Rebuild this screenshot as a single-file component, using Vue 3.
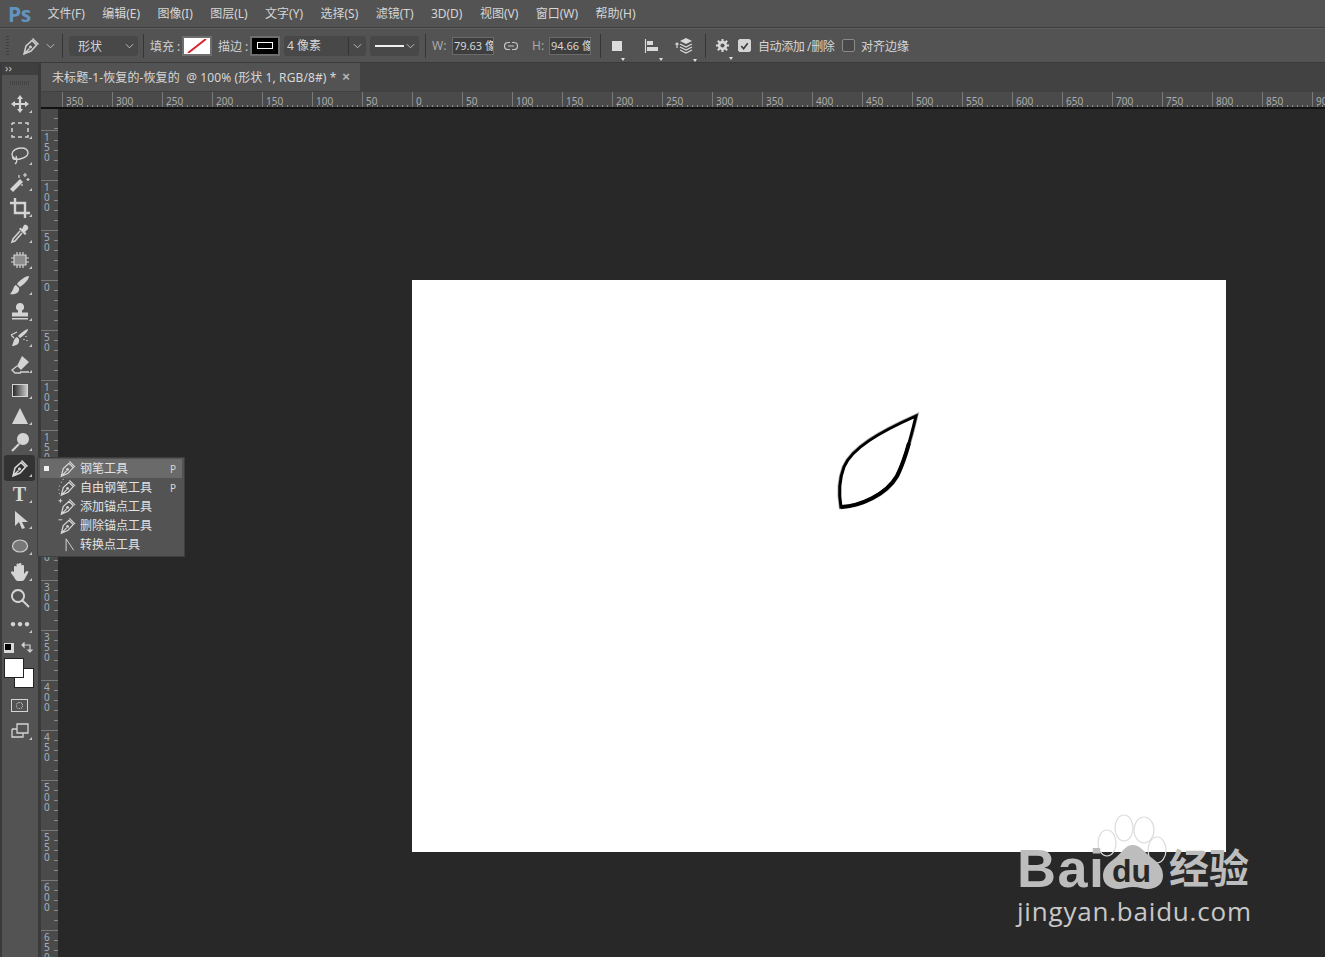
<script setup>
const menus = ['文件(F)', '编辑(E)', '图像(I)', '图层(L)', '文字(Y)', '选择(S)', '滤镜(T)', '3D(D)', '视图(V)', '窗口(W)', '帮助(H)']

const penStroke = 'M3 18l2-8 6-5.500 4.500 4.500-5.500 6zM3 18l5.500-5.500M11.500 2.500l6 6'
const penDot = 'M9.500 9.500a1.500 1.500 0 1 0 .01 0z'

const tools = [
  { fill: 'M10 1l3 4H7zM10 19l-3-4h6zM1 10l4-3v6zM19 10l-4 3V7z', stroke: 'M10 3v14M3 10h14', width: 2.2, corner: true },
  { stroke: 'M2 3h3M8 3h4M15 3h3v2M18 8v4M18 15v2h-3M12 17H8M5 17H2v-2M2 12V8M2 5V3', width: 1.5, corner: true },
  { stroke: 'M2 8c0-3 4-6 9-6s7 2 7 5-4 5-8 6-8-1-8-5zM3 10c-1 2 0 4 3 3M6 10c1 3 2 6-1 8', width: 1.4, corner: true },
  { fill: 'M3 20l-3-3 10-10 3 3z', stroke: 'M15 1v4M13 3h4M18 6v3M16.500 7.500h3M9 3v3M12 12v2', width: 1.2, corner: true },
  { stroke: 'M5 0v15h15M0 5h15v15', width: 2.4, corner: true },
  { fill: 'M14 1c3-1 5 2 4 4l-3 3 1.500 1.500-1.500 1.500-6-6 1.500-1.500L12 5z', stroke: 'M10 7l-7 8-1 3 3-1 7-8', width: 1.500, corner: true },
  { fill: 'M4 5h12v10H4z', fc: '#8c8c8c', stroke: 'M4 5h12v10H4zM7 2v3M10 2v3M13 2v3M7 15v3M10 15v3M13 15v3M1 8h3M1 12h3M16 8h3M16 12h3', width: 1.2, corner: true },
  { fill: 'M19 0c0 4-6 9-9 11l-3-3c2-3 8-8 12-8zM6 9c-3 1-2 5-6 9 5 1 10-1 9-6z', corner: true },
  { fill: 'M10 1a4 4 0 0 1 2 7.500v2h6v4H2v-4h6v-2A4 4 0 0 1 10 1zM2 16h16v1.500H2z', corner: true },
  { fill: 'M18 1c0 3-5 7-8 9l-2-2c2-2 6-6 10-7zM7 9c-3 1-3 4-5 9 4 0 8-2 7-7z', stroke: 'M1 7l6-3M1 7l3 3M14 11v1M16 8v1M17 12v1', width: 1.3, corner: true },
  { fill: 'M12 2l7 6-8 8-4-4z', stroke: 'M7 12l-5 4 3 3h6M10 18h9', width: 1.3, corner: true },
  { gradient: true, corner: true },
  { fill: 'M10 2l8 16H2z', corner: true },
  { fill: 'M13 1a6 6 0 1 1-.01 0z', stroke: 'M9 12l-7 7', width: 2.2, corner: true },
  { pen: true, corner: true },
  { letter: 'T', corner: true },
  { fill: 'M5 1v15l4-4 3 7 3-1-3-6h6z', corner: true },
  { ellipse: true, corner: true },
  { fill: 'M4 11V5c0-1.500 2.500-1.500 2.500 0v4V2.500c0-1.500 2.500-1.500 2.500 0V9V2c0-1.500 2.500-1.500 2.500 0v7V4c0-1.500 2.500-1.500 2.500 0v8l2-2.500c1.500-1.500 3 0 2 1.500l-3 5.500c-1 2-2 2.500-4 2.500H8c-2 0-3-2-4-4l-3-4c-.5-1.500 1.500-2.500 3-1z', corner: true },
  { stroke: 'M8 2a6 6 0 1 0 .01 0zM12 12l7 7', width: 1.9 },
  { fill: 'M3 8a2.200 2.200 0 1 0 .01 0zM10 8a2.200 2.200 0 1 0 .01 0zM17 8a2.200 2.200 0 1 0 .01 0z', corner: true },
]

const flyout = [
  { label: '钢笔工具', key: 'P', active: true },
  { label: '自由钢笔工具', key: 'P', extra: 'M1 17v-1M0.500 13v-1M1 9V8M3 5V4M5 2V1' },
  { label: '添加锚点工具', extra: 'M0 4h4M2 2v4' },
  { label: '删除锚点工具', extra: 'M0 4h4' },
  { label: '转换点工具', convert: true },
]

const hLabels = [350, 300, 250, 200, 150, 100, 50, 0]
for (let v = 50; v <= 900; v += 50) hLabels.push(v)

const vLabels = []
for (const v of [150, 100, 50, 0, 50, 100, 150, 200, 250, 300, 350, 400, 450, 500, 550, 600, 650]) {
  vLabels.push(String(v).split(''))
}
</script>

<template>
  <div class="app">
    <header class="menubar">
      <span class="logo">Ps</span>
      <span v-for="m in menus" :key="m" class="menu">{{ m }}</span>
    </header>

    <div class="options">
      <span class="grip"></span>
      <svg class="opt-pen" viewBox="0 0 20 20" width="20" height="20">
        <path :d="penStroke" fill="none" stroke="#d0d0d0" stroke-width="1.500" />
        <path :d="penDot" fill="#d0d0d0" />
      </svg>
      <svg class="chev opt-chev" viewBox="0 0 10 6" width="9" height="6"><path d="M1 1l4 4 4-4" /></svg>
      <span class="sep sep-a"></span>
      <div class="select shape-select">
        <span>形状</span>
        <svg class="chev" viewBox="0 0 10 6" width="9" height="6"><path d="M1 1l4 4 4-4" /></svg>
      </div>
      <span class="sep sep-b"></span>
      <span class="lbl fill-lbl">填充 :</span>
      <span class="swatch fill-swatch">
        <svg viewBox="0 0 24 14" width="24" height="14"><path d="M3 14L21 0" stroke="#d8262c" stroke-width="2" /></svg>
      </span>
      <span class="lbl stroke-lbl">描边 :</span>
      <span class="swatch stroke-swatch"><i></i></span>
      <div class="select width-select">
        <span class="w-val">4 像素</span>
        <span class="w-btn"><svg class="chev" viewBox="0 0 10 6" width="9" height="6"><path d="M1 1l4 4 4-4" /></svg></span>
      </div>
      <div class="select line-select">
        <i class="line"></i>
        <svg class="chev" viewBox="0 0 10 6" width="9" height="6"><path d="M1 1l4 4 4-4" /></svg>
      </div>
      <span class="sep sep-c"></span>
      <span class="lbl dim w-lbl">W:</span>
      <span class="input">79.63 像</span>
      <svg class="link" viewBox="0 0 14 10" width="14" height="10">
        <path d="M6 1.500H4a3.500 3.500 0 0 0 0 7h2M8 1.500h2a3.500 3.500 0 0 1 0 7H8M4 5h6" fill="none" stroke="#c4c4c4" stroke-width="1.200" />
      </svg>
      <span class="lbl dim h-lbl">H:</span>
      <span class="input">94.66 像</span>
      <span class="sep sep-d"></span>
      <span class="op-icon path-op"><i class="square"></i></span>
      <span class="op-icon align-op">
        <svg viewBox="0 0 16 16" width="16" height="16"><path d="M1.500 1v14" stroke="#d8d8d8" stroke-width="1.200" /><path d="M3 3h6v4H3zM3 9h11v4H3z" fill="#d8d8d8" /></svg>
      </span>
      <span class="op-icon stack-op">
        <svg viewBox="0 0 20 18" width="20" height="18"><path d="M12 1l6 3-6 3-6-3z" fill="#d8d8d8" /><path d="M6 7l6 3 6-3M6 10l6 3 6-3M6 13l6 3 6-3M3 11V6M1.500 7.500L3 6l1.500 1.500" fill="none" stroke="#d8d8d8" stroke-width="1.200" /></svg>
      </span>
      <span class="sep sep-e"></span>
      <span class="op-icon gear-op">
        <svg viewBox="0 0 16 16" width="15" height="15"><circle cx="8" cy="8" r="3.500" fill="none" stroke="#d8d8d8" stroke-width="3" /><path d="M8 1v14M1 8h14M3 3l10 10M13 3L3 13" stroke="#d8d8d8" stroke-width="2.200" /><circle cx="8" cy="8" r="2.200" fill="#535353" /></svg>
      </span>
      <span class="check checked">
        <svg viewBox="0 0 12 12" width="12" height="12"><path d="M2.500 6l2.500 3 4.500-6" fill="none" stroke="#3c3c3c" stroke-width="1.800" /></svg>
      </span>
      <span class="opt-text auto-text">自动添加 /删除</span>
      <span class="check"></span>
      <span class="opt-text">对齐边缘</span>
    </div>

    <div class="workspace">
      <aside class="toolbar">
        <div class="tool-strip">››</div>
        <div class="tool-grip"></div>
        <div v-for="(t, i) in tools" :key="i" class="tool" :class="{ active: t.pen, corner: t.corner }">
          <svg v-if="t.pen" viewBox="0 0 20 20" width="20" height="20">
            <path :d="penStroke" fill="none" stroke="#dcdcdc" stroke-width="1.500" />
            <path :d="penDot" fill="#dcdcdc" />
          </svg>
          <span v-else-if="t.gradient" class="grad"></span>
          <span v-else-if="t.letter" class="letter">{{ t.letter }}</span>
          <svg v-else-if="t.ellipse" viewBox="0 0 20 20" width="20" height="20">
            <ellipse cx="10" cy="10" rx="7.500" ry="6" fill="#787878" stroke="#cfcfcf" stroke-width="1.200" />
          </svg>
          <svg v-else viewBox="0 0 20 20" width="20" height="20">
            <path v-if="t.fill" :d="t.fill" :fill="t.fc || '#d4d4d4'" />
            <path v-if="t.stroke" :d="t.stroke" fill="none" stroke="#d4d4d4" :stroke-width="t.width" />
          </svg>

          <div v-if="t.pen" class="flyout">
            <div v-for="f in flyout" :key="f.label" class="fly-row" :class="{ on: f.active }">
              <i class="bullet"></i>
              <svg class="fly-icon" viewBox="0 0 20 20" width="20" height="19">
                <template v-if="f.convert">
                  <path d="M8 17V4l8 12" fill="none" stroke="#d8d8d8" stroke-width="1" />
                </template>
                <template v-else>
                  <path :d="penStroke" fill="none" stroke="#d8d8d8" stroke-width="1.300" />
                  <path :d="penDot" fill="#d8d8d8" />
                  <path v-if="f.extra" :d="f.extra" fill="none" stroke="#d8d8d8" stroke-width="1" />
                </template>
              </svg>
              <span class="fly-label">{{ f.label }}</span>
              <span class="fly-key">{{ f.key }}</span>
            </div>
          </div>
        </div>

        <div class="colors">
          <span class="mini-swatch"><i></i></span>
          <svg class="swap" viewBox="0 0 12 12" width="12" height="12"><path d="M2 3h7v5M1 3l2-2v4zM9 10l-2-2h4z" fill="none" stroke="#d4d4d4" stroke-width="1.200" /></svg>
          <span class="bg-color"></span>
          <span class="fg-color"></span>
        </div>
        <div class="tool">
          <span class="mask"><i></i></span>
        </div>
        <div class="tool corner">
          <svg viewBox="0 0 20 20" width="20" height="20">
            <path d="M7 3h11v9H7z M2 8h5M2 8v8h11v-4" fill="none" stroke="#d4d4d4" stroke-width="1.300" />
          </svg>
        </div>
      </aside>

      <main class="main">
        <div class="tabs">
          <div class="tab">
            <span>未标题-1-恢复的-恢复的&nbsp; @ 100% (形状 1, RGB/8#) *</span>
            <b class="close">×</b>
          </div>
        </div>
        <div class="h-ruler">
          <div class="corner-box"></div>
          <div v-for="(l, i) in hLabels" :key="i" class="h-cell"><span>{{ l }}</span></div>
        </div>
        <div class="stage">
          <div class="v-ruler">
            <div class="v-spacer"></div>
            <div v-for="(l, i) in vLabels" :key="i" class="v-cell">
              <span v-for="(d, j) in l" :key="j">{{ d }}</span>
            </div>
          </div>
          <div class="canvas">
            <div class="doc">
              <svg class="doc-art" viewBox="412 280 814 572" width="814" height="572">
                <path d="M916 416C880 432 852 448 844 467C839 480 839 495 841 507C860 506 886 495 897 476C905 460 911 437 916 416Z" fill="none" stroke="#a0a0a0" stroke-width="4.500" />
                <path d="M916 416C880 432 852 448 844 467C839 480 839 495 841 507C860 506 886 495 897 476C905 460 911 437 916 416Z" fill="#fff" stroke="#000" stroke-width="3" />
                <path d="M841 507C860 506 886 495 897 476C902 466 906 454 909 443" fill="none" stroke="#000" stroke-width="4" />
              </svg>
            </div>
          </div>
        </div>
      </main>
    </div>

    <div class="watermark">
      <svg class="paw" viewBox="0 0 70 80" width="70" height="80">
        <ellipse cx="7" cy="29" rx="9" ry="13" fill="none" stroke="#dcdcdc" stroke-width="1.200" />
        <ellipse cx="24" cy="14" rx="9" ry="13" fill="none" stroke="#dcdcdc" stroke-width="1.200" />
        <ellipse cx="44" cy="16" rx="10" ry="13" fill="none" stroke="#dcdcdc" stroke-width="1.200" />
        <ellipse cx="57" cy="36" rx="9" ry="13" fill="none" stroke="#dcdcdc" stroke-width="1.200" />
        <path d="M33 31c7 0 11 7 19 13c8 6 11 11 11 18c0 8-7 13-15 13c-5 0-9-2-15-2s-10 2-15 2c-8 0-15-5-15-13c0-7 4-12 11-17c8-6 11-14 19-14z" fill="#bdbdbd" />
      </svg>
      <span class="wm-bai">Bai</span>
      <span class="wm-du">du</span>
      <span class="wm-cn">经验</span>
      <span class="wm-url">jingyan.baidu.com</span>
    </div>
  </div>
</template>

<style>
html, body { margin: 0; padding: 0; background: #282828; overflow: hidden; }
</style>

<style scoped>
.app {
  position: relative;
  width: 1325px;
  height: 957px;
  overflow: hidden;
  background: #282828;
  color: #d6d6d6;
  font: 12px "Noto Sans", "Noto Sans CJK SC", sans-serif;
  display: flex;
  flex-direction: column;
}
.menubar {
  height: 28px;
  flex: none;
  box-sizing: border-box;
  background: #535353;
  border-bottom: 1px solid #3e3e3e;
  display: flex;
  align-items: center;
  gap: 17.4px;
  padding-left: 8px;
}
.logo {
  width: 22px;
  font: bold 21px "Open Sans", sans-serif;
  color: #6294c0;
  letter-spacing: -0.5px;
  line-height: 26px;
}
.menu { line-height: 27px; white-space: nowrap; }

.options {
  height: 35px;
  flex: none;
  box-sizing: border-box;
  background: #535353;
  border-top: 1px solid #5f5f5f;
  border-bottom: 1px solid #3a3a3a;
  display: flex;
  align-items: center;
}
.grip {
  width: 3px;
  height: 20px;
  margin-left: 6px;
  background: repeating-linear-gradient(180deg, #3f3f3f 0 1px, transparent 1px 3px);
}
.opt-pen { margin-left: 12px; }
.chev { fill: none; stroke: #c8c8c8; stroke-width: 1; flex: none; }
.opt-chev { margin-left: 5px; }
.sep { width: 1px; height: 24px; background: #363636; flex: none; }
.sep-a { margin-left: 7px; }
.select {
  box-sizing: border-box;
  height: 20px;
  border: 1px solid #474747;
  border-radius: 3px;
  background: #484848;
  display: flex;
  align-items: center;
  justify-content: space-between;
  flex: none;
}
.shape-select { width: 69px; margin-left: 6px; padding: 0 3px 0 8px; }
.sep-b { margin-left: 5px; }
.lbl { white-space: nowrap; flex: none; color: #d0d0d0; }
.fill-lbl { margin-left: 6px; width: 32px; }
.swatch {
  box-sizing: border-box;
  width: 30px;
  height: 20px;
  border: 2px solid #6e6e6e;
  display: flex;
  align-items: center;
  justify-content: center;
  flex: none;
}
.fill-swatch { background: #fff; }
.fill-swatch svg { display: block; }
.stroke-lbl { margin-left: 6px; width: 32px; }
.stroke-swatch { background: #000; }
.stroke-swatch i { width: 14px; height: 5px; border: 1px solid #fff; }
.width-select { width: 82px; margin-left: 4px; padding: 0; }
.w-val { flex: 1; padding-left: 2px; line-height: 18px; }
.w-btn {
  width: 16px;
  height: 18px;
  border-left: 1px solid #343434;
  display: flex;
  align-items: center;
  justify-content: center;
}
.line-select { width: 49px; margin-left: 4px; padding: 0 3px 0 4px; }
.line { width: 29px; height: 2px; background: #f0f0f0; }
.sep-c { margin-left: 6px; }
.dim { color: #a8a8a8; }
.w-lbl { margin-left: 6px; width: 20px; }
.input {
  box-sizing: border-box;
  width: 42px;
  height: 18px;
  border: 1px solid #6a6a6a;
  background: #3e3e3e;
  font-size: 11px;
  line-height: 16px;
  padding-left: 1px;
  overflow: hidden;
  white-space: nowrap;
  flex: none;
}
.link { margin-left: 10px; flex: none; }
.h-lbl { margin-left: 14px; width: 17px; }
.sep-d { margin-left: 9px; }
.op-icon {
  position: relative;
  flex: none;
  display: flex;
  align-items: center;
  justify-content: center;
}
.op-icon::after {
  content: "";
  position: absolute;
  right: -3px;
  bottom: -7px;
  border: 2px solid transparent;
  border-top: 3px solid #e0e0e0;
  border-bottom: 0;
}
.square { width: 10px; height: 10px; background: #dcdcdc; flex: none; }
.path-op { margin-left: 11px; width: 10px; height: 16px; }
.align-op { margin-left: 22px; width: 16px; height: 16px; }
.stack-op { margin-left: 14px; width: 20px; height: 18px; }
.sep-e { margin-left: 11px; }
.gear-op { margin-left: 9px; width: 15px; height: 15px; }
.check {
  box-sizing: border-box;
  width: 13px;
  height: 13px;
  border: 1px solid #8a8a8a;
  border-radius: 2px;
  flex: none;
  display: flex;
  align-items: center;
  justify-content: center;
  background: #484848;
}
.check.checked { margin-left: 8px; background: #d4d4d4; border-color: #d4d4d4; }
.opt-text { margin-left: 6px; white-space: nowrap; }
.auto-text { width: 77px; margin-right: 7px; margin-left: 7px; letter-spacing: -0.4px; }

.workspace { flex: 1; display: flex; min-height: 0; }
.toolbar {
  width: 38px;
  flex: none;
  box-sizing: border-box;
  background: #535353;
  border-left: 2px solid #3a3a3a;
  margin-right: 3px;
  position: relative;
}
.toolbar::after {
  content: "";
  position: absolute;
  top: 0;
  bottom: 0;
  right: -3px;
  width: 3px;
  background: #3a3a3a;
}
.tool-strip {
  height: 12px;
  background: #3f3f3f;
  color: #c8c8c8;
  font-size: 11px;
  line-height: 10px;
  padding-left: 3px;
}
.tool-grip {
  height: 16px;
  background: repeating-linear-gradient(90deg, #444 0 1px, transparent 1px 2px) center / 20px 4px no-repeat;
}
.tool {
  position: relative;
  width: 31px;
  height: 26px;
  margin-left: 2px;
  box-sizing: border-box;
  display: flex;
  align-items: center;
  justify-content: center;
  border-radius: 3px;
}
.tool.corner::before {
  content: "";
  position: absolute;
  right: 3px;
  bottom: 4px;
  border-left: 3px solid transparent;
  border-bottom: 3px solid #c8c8c8;
}
.tool.active { background: #333; z-index: 3; }
.grad {
  box-sizing: border-box;
  width: 16px;
  height: 13px;
  border: 1px solid #d4d4d4;
  background: linear-gradient(90deg, #2a2a2a, #c8c8c8);
}
.letter {
  font: bold 20px "Liberation Serif", serif;
  color: #d8d8d8;
  line-height: 26px;
}
.mask {
  box-sizing: border-box;
  width: 17px;
  height: 13px;
  border: 1px solid #d4d4d4;
  display: flex;
  align-items: center;
  justify-content: center;
}
.mask i { width: 7px; height: 7px; border: 1px dotted #d4d4d4; border-radius: 50%; box-sizing: border-box; }
.colors { position: relative; height: 55px; }
.mini-swatch {
  position: absolute;
  left: 2px;
  top: 6px;
  width: 10px;
  height: 10px;
  background: #d8d8d8;
}
.mini-swatch i {
  position: absolute;
  left: 0;
  top: 0;
  width: 6px;
  height: 6px;
  background: #000;
  border: 1px solid #ddd;
}
.swap { position: absolute; left: 19px; top: 5px; }
.fg-color, .bg-color {
  position: absolute;
  box-sizing: border-box;
  width: 20px;
  height: 20px;
  background: #fff;
  border: 1px solid #222;
}
.fg-color { left: 2px; top: 21px; }
.bg-color { left: 12px; top: 31px; }

.flyout {
  position: absolute;
  left: 33px;
  top: 2px;
  width: 148px;
  height: 100px;
  box-sizing: border-box;
  padding: 1px 2px;
  background: #535353;
  border: 1px solid #3e3e3e;
  z-index: 5;
}
.fly-row {
  height: 19px;
  display: flex;
  align-items: center;
  position: relative;
  white-space: nowrap;
  color: #e2e2e2;
}
.fly-row.on { background: #6a6a6a; }
.bullet { width: 5px; flex: none; margin-left: 4px; }
.fly-row.on .bullet { height: 5px; background: #f0f0f0; }
.fly-icon { margin-left: 9px; flex: none; }
.fly-label { margin-left: 2px; margin-top: -1px; flex: 1; }
.fly-key { width: 12px; color: #d8d8d8; font-size: 10px; }

.main { flex: 1; min-width: 0; display: flex; flex-direction: column; }
.tabs { height: 29px; flex: none; background: #424242; display: flex; }
.tab {
  box-sizing: border-box;
  width: 319px;
  height: 28px;
  background: #535353;
  display: flex;
  align-items: center;
  padding-left: 11px;
  white-space: nowrap;
  color: #d8d8d8;
  letter-spacing: 0.1px;
  position: relative;
}
.close {
  position: absolute;
  right: 10px;
  top: 6px;
  color: #b8b8b8;
  font: bold 13px "Liberation Sans", sans-serif;
}
.h-ruler {
  height: 17px;
  flex: none;
  box-sizing: border-box;
  background: #4a4a4a;
  border-bottom: 2px solid #111;
  display: flex;
  overflow: hidden;
}
.corner-box { width: 21px; flex: none; }
.h-cell {
  width: 50px;
  flex: none;
  box-sizing: border-box;
  border-left: 1px solid #7a7a7a;
  padding: 3px 0 0 3px;
  font-size: 10px;
  line-height: 13px;
  color: #ababab;
  background: repeating-linear-gradient(90deg, transparent 0 4px, #8a8a8a 4px 5px) bottom / 100% 2px no-repeat;
}
.stage { flex: 1; display: flex; min-height: 0; }
.v-ruler {
  width: 17px;
  flex: none;
  background: #4a4a4a;
  overflow: hidden;
}
.v-spacer {
  height: 21px;
  background: repeating-linear-gradient(180deg, transparent 0 9px, #8a8a8a 9px 10px) right / 4px 100% no-repeat;
}
.v-cell {
  height: 50px;
  box-sizing: border-box;
  border-top: 1px solid #7a7a7a;
  padding: 1px 0 0 3px;
  font-size: 10px;
  line-height: 10px;
  color: #a6b0ba;
  display: flex;
  flex-direction: column;
  background: repeating-linear-gradient(180deg, transparent 0 9px, #8a8a8a 9px 10px) right / 4px 100% no-repeat;
}
.canvas {
  flex: 1;
  background: #282828;
  padding: 171px 0 0 354px;
  min-width: 0;
}
.doc {
  width: 814px;
  height: 572px;
  background: #fff;
}
.doc-art { display: block; }

.watermark {
  position: absolute;
  left: 1017px;
  top: 814px;
  width: 240px;
  height: 120px;
  z-index: 4;
  color: #bdbdbd;
}
.paw { position: absolute; left: 83px; top: 0; overflow: visible; }
.wm-bai {
  position: absolute;
  left: 0;
  top: 24px;
  font: bold 54px/60px "Liberation Sans", sans-serif;
  letter-spacing: 1.500px;
}
.wm-du {
  position: absolute;
  left: 95px;
  top: 37px;
  font: bold 32px/40px "Liberation Sans", sans-serif;
  color: #282828;
}
.wm-cn {
  position: absolute;
  left: 152px;
  top: 26px;
  font: bold 40px/52px "Noto Sans CJK SC", sans-serif;
  white-space: nowrap;
}
.wm-url {
  position: absolute;
  left: 0;
  top: 79px;
  font: 26px/36px "Open Sans", sans-serif;
  letter-spacing: 0.8px;
  color: #c8c8c8;
  white-space: nowrap;
}
</style>
